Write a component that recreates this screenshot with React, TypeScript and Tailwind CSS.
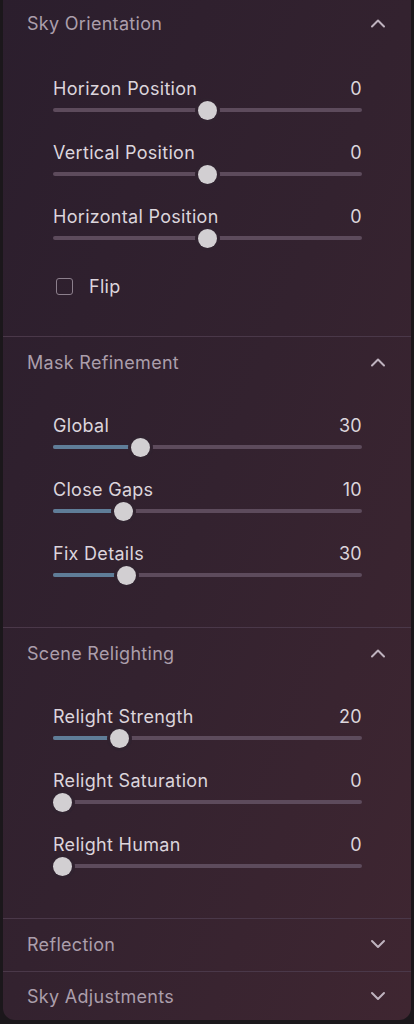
import React from 'react';

type SliderDef = { label: string; value: number; pos: number; fill?: boolean };

function Chevron({ up }: { up: boolean }) {
  return (
    <svg width="16" height="10" viewBox="0 0 16 10" fill="none" className="text-[#bfb3bf]">
      {up ? (
        <path d="M2 8.5 L8 2.5 L14 8.5" stroke="currentColor" strokeWidth="2" strokeLinecap="round" strokeLinejoin="round" />
      ) : (
        <path d="M2 2 L8 8 L14 2" stroke="currentColor" strokeWidth="2" strokeLinecap="round" strokeLinejoin="round" />
      )}
    </svg>
  );
}

function Slider({ label, value, pos, fill }: SliderDef) {
  // pos: 0..1 of the thumb travel
  const thumbLeft = `calc(${pos} * (100% - 19px))`;
  const fillWidth = `calc(${pos} * (100% - 19px) + 9px)`;
  return (
    <div className="flex flex-col">
      <div className="flex h-[22px] items-center justify-between text-[18px] tracking-[0.3px] text-[#dcd5dc]">
        <span>{label}</span>
        <span>{value}</span>
      </div>
      <div className="relative mt-[1px] h-[20px]">
        <div className="absolute left-0 right-0 top-[8px] h-[4px] rounded-full bg-[#5d4b5c]" />
        {fill && (
          <div className="absolute left-0 top-[8px] h-[4px] rounded-full bg-[#5f7d98]" style={{ width: fillWidth }} />
        )}
        <div
          className="absolute top-[0.5px] h-[19px] w-[19px] rounded-full bg-[#d2cfd2] shadow-[0_0_0_3px_#30222f]"
          style={{ left: thumbLeft }}
        />
      </div>
    </div>
  );
}

function Header({ title, open, className = '' }: { title: string; open: boolean; className?: string }) {
  return (
    <div className={`flex items-center justify-between pl-[24px] pr-[25px] text-[18px] tracking-[0.3px] text-[#ab9eab] ${className}`}>
      <span>{title}</span>
      <Chevron up={open} />
    </div>
  );
}

function SliderGroup({ items }: { items: SliderDef[] }) {
  return (
    <div className="flex flex-col gap-[21px] pl-[50px] pr-[49px]">
      {items.map((s) => (
        <Slider key={s.label} {...s} />
      ))}
    </div>
  );
}

export default function App() {
  return (
    <div
      className="h-[1024px] w-[414px] overflow-hidden bg-[#1b171b] px-[3px]"
      style={{ fontFamily: 'Inter, "Noto Sans", sans-serif' }}
    >
      <div className="flex h-[1020px] flex-col overflow-hidden rounded-b-[12px] bg-gradient-to-br from-[#2b1e2d] via-[#33222f] to-[#3f2631]">
        <section className="-mt-[2px] border-b border-[#4a3849]">
          <Header title="Sky Orientation" open className="h-[50px]" />
          <div className="pt-[29px] pb-[40px]">
            <SliderGroup
              items={[
                { label: 'Horizon Position', value: 0, pos: 0.5 },
                { label: 'Vertical Position', value: 0, pos: 0.5 },
                { label: 'Horizontal Position', value: 0, pos: 0.5 },
              ]}
            />
            <div className="mt-[28px] flex h-[20px] items-center gap-[16px] pl-[53px]">
              <div className="h-[17px] w-[17px] shrink-0 rounded-[3px] border-[1.5px] border-[#8c7f8c]" />
              <span className="text-[18px] tracking-[0.3px] text-[#dcd5dc]">Flip</span>
            </div>
          </div>
        </section>

        <section className="border-b border-[#4a3849]">
          <Header title="Mask Refinement" open className="h-[50px]" />
          <div className="pt-[27px] pb-[42px]">
            <SliderGroup
              items={[
                { label: 'Global', value: 30, pos: 0.27, fill: true },
                { label: 'Close Gaps', value: 10, pos: 0.209, fill: true },
                { label: 'Fix Details', value: 30, pos: 0.219, fill: true },
              ]}
            />
          </div>
        </section>

        <section className="border-b border-[#4a3849]">
          <Header title="Scene Relighting" open className="h-[50px]" />
          <div className="pt-[27px] pb-[42px]">
            <SliderGroup
              items={[
                { label: 'Relight Strength', value: 20, pos: 0.198, fill: true },
                { label: 'Relight Saturation', value: 0, pos: 0 },
                { label: 'Relight Human', value: 0, pos: 0 },
              ]}
            />
          </div>
        </section>

        <section className="border-b border-[#4a3849]">
          <Header title="Reflection" open={false} className="h-[52px] pb-[2px]" />
        </section>

        <section>
          <Header title="Sky Adjustments" open={false} className="h-[48px]" />
        </section>
      </div>
    </div>
  );
}
